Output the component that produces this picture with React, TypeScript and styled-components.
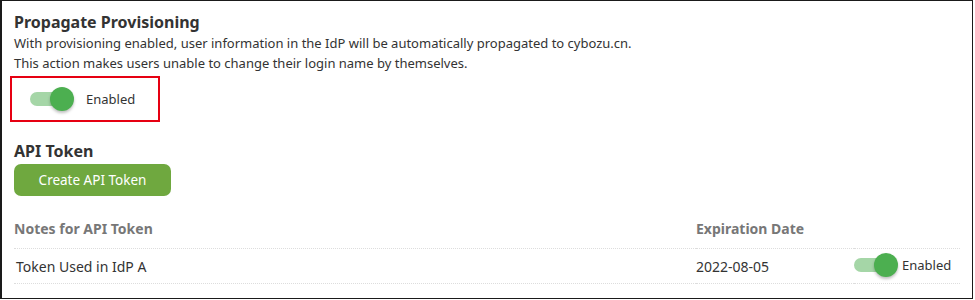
import React from "react";
import styled, { createGlobalStyle } from "styled-components";

const GlobalStyle = createGlobalStyle`
  html, body {
    margin: 0;
    padding: 0;
    background: #fff;
  }
  body {
    font-family: "Noto Sans", "Liberation Sans", sans-serif;
    color: #333;
  }
`;

type Token = { note: string; expires: string; enabled: boolean };

const tokens: Token[] = [{ note: "Token Used in IdP A", expires: "2022-08-05", enabled: true }];

function Toggle({ on, label, gap }: { on: boolean; label: string; gap: number }) {
  return (
    <ToggleWrap $gap={gap}>
      <Track $on={on}>
        <Knob $on={on} />
      </Track>
      <ToggleLabel>{label}</ToggleLabel>
    </ToggleWrap>
  );
}

export default function App() {
  return (
    <>
      <GlobalStyle />
      <Frame>
        <Heading>Propagate Provisioning</Heading>
        <Description>
          With provisioning enabled, user information in the IdP will be automatically propagated to cybozu.cn.
          <br />
          This action makes users unable to change their login name by themselves.
        </Description>
        <Highlight>
          <Toggle on={true} label="Enabled" gap={20} />
        </Highlight>

        <TokenHeading>API Token</TokenHeading>
        <CreateButton type="button">Create API Token</CreateButton>

        <Table>
          <thead>
            <tr>
              <HeadCell>Notes for API Token</HeadCell>
              <HeadCell $width="158px">Expiration Date</HeadCell>
              <HeadCell $width="106px" />
            </tr>
          </thead>
          <tbody>
            {tokens.map((token) => (
              <tr key={token.note}>
                <BodyCell $indent>{token.note}</BodyCell>
                <BodyCell>{token.expires}</BodyCell>
                <BodyCell>
                  <Toggle on={token.enabled} label="Enabled" gap={12} />
                </BodyCell>
              </tr>
            ))}
          </tbody>
        </Table>
      </Frame>
    </>
  );
}

const Frame = styled.div`
  box-sizing: border-box;
  width: 973px;
  height: 299px;
  border: 1px solid #1a1a1a;
  border-left-width: 2px;
  padding: 10px 12px 0 12px;
`;

const Heading = styled.h2`
  margin: 0;
  font-size: 16px;
  line-height: 22px;
  font-weight: bold;
  color: #333;
`;

const Description = styled.p`
  margin: 0;
  font-size: 13px;
  line-height: 20px;
  color: #333;
`;

const Highlight = styled.div`
  display: inline-flex;
  align-items: center;
  box-sizing: border-box;
  width: 150px;
  height: 46px;
  margin: 3px 0 0 -4px;
  padding-left: 18px;
  border: 2px solid #e60012;
`;

const ToggleWrap = styled.div<{ $gap: number }>`
  display: inline-flex;
  align-items: center;
  gap: ${(p) => p.$gap}px;
`;

const Track = styled.span<{ $on: boolean }>`
  position: relative;
  display: inline-block;
  width: 36px;
  height: 14px;
  border-radius: 7px;
  background: ${(p) => (p.$on ? "#a5d6a7" : "#ccc")};
`;

const Knob = styled.span<{ $on: boolean }>`
  position: absolute;
  top: -5px;
  left: ${(p) => (p.$on ? "20px" : "-4px")};
  width: 24px;
  height: 24px;
  border-radius: 50%;
  background: ${(p) => (p.$on ? "#4caf50" : "#f5f5f5")};
  box-shadow: 0 2px 3px rgba(0, 0, 0, 0.25);
`;

const ToggleLabel = styled.span`
  font-size: 13px;
  color: #333;
`;

const TokenHeading = styled(Heading)`
  margin-top: 18px;
`;

const CreateButton = styled.button`
  display: block;
  width: 157px;
  height: 32px;
  margin-top: 2px;
  border: none;
  border-radius: 7px;
  background: #6fa83f;
  color: #fff;
  font-family: inherit;
  font-size: 13.5px;
  cursor: pointer;
`;

const Table = styled.table`
  width: 946px;
  margin-top: 16px;
  border-collapse: collapse;
`;

const HeadCell = styled.th<{ $width?: string }>`
  width: ${(p) => p.$width ?? "auto"};
  padding: 8px 0 10px;
  text-align: left;
  font-size: 14px;
  line-height: 18px;
  font-weight: bold;
  color: #777;
  border-bottom: 1px dotted #ddd;
`;

const BodyCell = styled.td<{ $indent?: boolean }>`
  height: 34px;
  padding: 0 0 0 ${(p) => (p.$indent ? "2px" : "0")};
  font-size: 14px;
  color: #333;
  border-bottom: 1px dotted #ddd;
`;
